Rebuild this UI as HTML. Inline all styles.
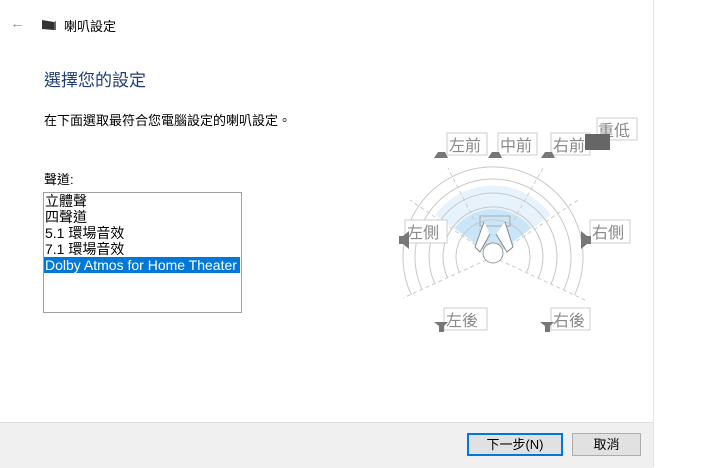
<!DOCTYPE html>
<html><head><meta charset="utf-8"><style>
body{margin:0;width:720px;height:467px;background:#fff;position:relative;overflow:hidden;font-family:"Segoe UI","Liberation Sans","Noto Sans CJK TC",sans-serif;}
.win{position:absolute;left:0;top:0;width:653px;height:467px;border-right:1px solid #e3e3e3;background:#fff}
.foot{position:absolute;left:0;top:422px;width:653px;height:45px;background:#f0f0f0;border-top:1px solid #dfdfdf}
.t{position:absolute;white-space:nowrap;color:#000}
.btn{position:absolute;top:433px;height:23px;background:#e1e1e1;border:1px solid #adadad;font-size:13px;text-align:center;line-height:21px;box-sizing:border-box}
.list{position:absolute;left:43px;top:192px;width:199px;height:121px;border:1px solid #a0a0a0;box-sizing:border-box;font-size:14px}
.list div{height:16px;line-height:16px;padding-left:1px;white-space:nowrap;overflow:hidden}
</style></head><body>
<div class="win">
<div class="t" style="left:10px;top:15px;color:#999;font-size:15px">&#8592;</div>
<svg style="position:absolute;left:41px;top:18px" width="16" height="14"><path d="M1 2 L13 4 L13 12 L1 11 Z" fill="#333"/><path d="M13 4 L15 3 L15 12 L13 12Z" fill="#666"/></svg>
<div class="t" style="left:64px;top:16px;font-size:13px">喇叭設定</div>
<div class="t" style="left:44px;top:66px;font-size:17px;color:#1f3d7a">選擇您的設定</div>
<div class="t" style="left:44px;top:110px;font-size:13px">在下面選取最符合您電腦設定的喇叭設定。</div>
<div class="t" style="left:44px;top:169px;font-size:13px">聲道:</div>
<div class="list">
<div>立體聲</div><div>四聲道</div><div>5.1 環場音效</div><div>7.1 環場音效</div>
<div style="background:#0078d7;color:#fff;margin-right:1px">Dolby Atmos for Home Theater</div>
</div>
<svg style="position:absolute;left:395px;top:110px" width="258" height="240" viewBox="395 110 258 240" font-family="Liberation Sans,Noto Sans CJK TC,sans-serif">
<path d="M493 257 L435 215 A72 72 0 0 1 551 215 Z" fill="#e6f3fc"/>
<path d="M493 257 L455 228 A48 48 0 0 1 531 228 Z" fill="#c8e6f8"/>
<g fill="none" stroke="#c8c8c8" stroke-width="1">
<path d="M411.5 295 A90 90 0 1 1 574.5 295"/>
<path d="M422.3 290 A78 78 0 1 1 563.7 290"/>
<path d="M435 284 A64 64 0 1 1 551 284"/>
<path d="M447.7 278 A50 50 0 1 1 538.3 278"/>
<path d="M459.5 272.6 A37 37 0 1 1 526.5 272.6"/>
</g>
<g stroke="#ccc" stroke-dasharray="4 3" fill="none">
<line x1="493" y1="257" x2="448" y2="168"/><line x1="493" y1="257" x2="543" y2="168"/>
<line x1="493" y1="257" x2="410" y2="200"/><line x1="493" y1="257" x2="578" y2="200"/>
<line x1="493" y1="257" x2="403" y2="298"/><line x1="493" y1="257" x2="585" y2="300"/>
</g>
<rect x="480" y="216" width="30" height="10" fill="none" stroke="#aaa"/>
<path d="M484 222 L475 247 L480 252 L490 234 M505 222 L513 247 L507 252 L496 234" fill="#fff" stroke="#888"/>
<circle cx="493" cy="253" r="10" fill="#fff" stroke="#999"/>
<g fill="#fff" stroke="#ccc">
<rect x="447" y="133" width="40" height="22"/><rect x="498" y="133" width="39" height="22"/><rect x="551" y="133" width="39" height="22"/>
<rect x="597" y="118" width="40" height="22"/>
<rect x="405" y="220" width="42" height="23"/><rect x="590" y="220" width="40" height="23"/>
<rect x="444" y="308" width="43" height="22"/><rect x="551" y="308" width="39" height="22"/>
</g>
<g fill="#8a8a8a" font-size="16">
<text x="449" y="151">左前</text><text x="500" y="151">中前</text><text x="553" y="151">右前</text><text x="598" y="136">重低</text>
<text x="407" y="238">左側</text><text x="592" y="238">右側</text><text x="446" y="326">左後</text><text x="553" y="326">右後</text>
</g>
<g fill="#777">
<path d="M434 158 L448 158 L445 152 L438 152Z"/><path d="M488 158 L502 158 L499 152 L492 152Z"/><path d="M541 158 L555 158 L552 152 L545 152Z"/>
<path d="M434 322 L448 322 L444 326 L444 332 L439 332 L439 326Z"/><path d="M540 322 L554 322 L550 326 L550 332 L545 332 L545 326Z"/>
<path d="M403 236 L403 244 L399 244 L399 236Z M403 236 L409 231 L409 249 L403 244Z"/>
<path d="M587 236 L587 244 L591 244 L591 236Z M587 236 L581 231 L581 249 L587 244Z"/>
<rect x="585" y="134" width="25" height="16" fill="#666"/>
</g>
</svg>
<div class="foot"></div>
<div class="btn" style="left:467px;width:96px;border:1px solid #0078d7;box-shadow:inset 0 0 0 1px #0078d7">下一步(N)</div>
<div class="btn" style="left:572px;width:69px">取消</div>
</div>
</body></html>
